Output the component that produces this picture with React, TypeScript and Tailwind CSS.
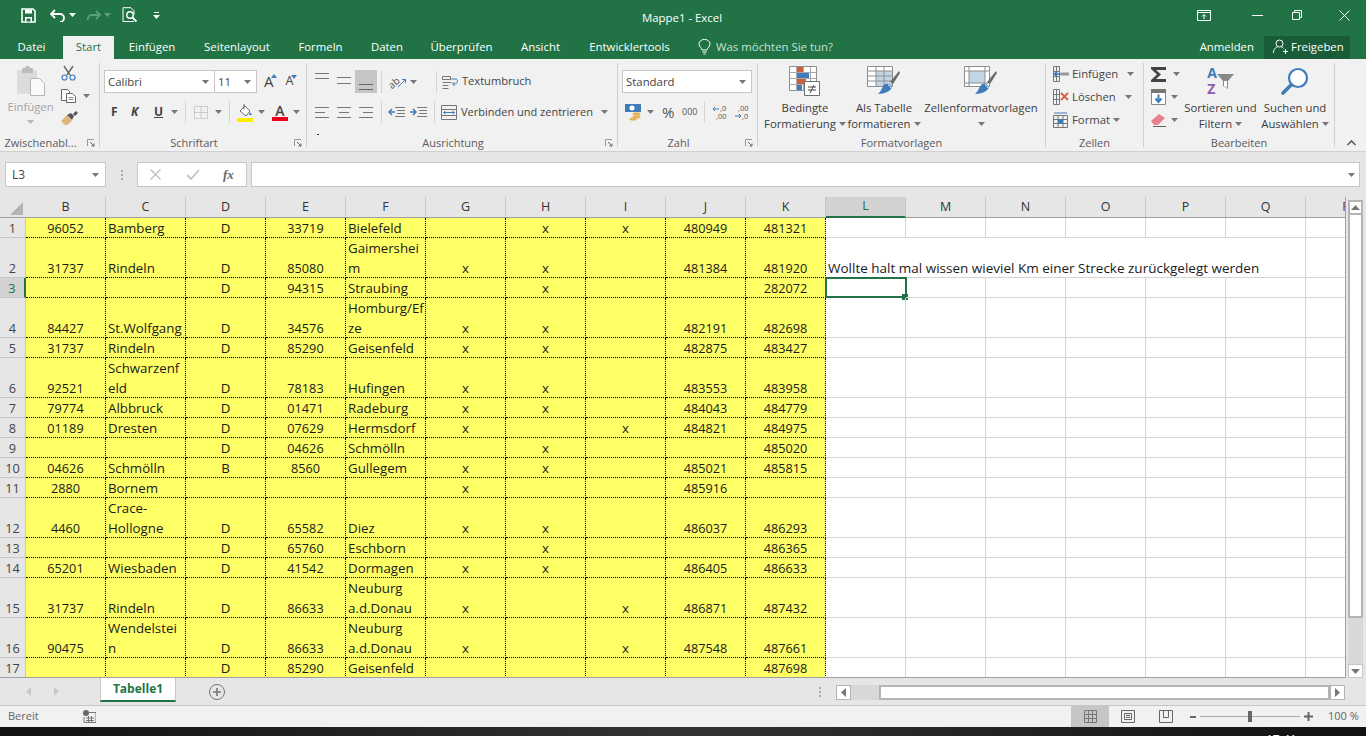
import React from "react";

type RowData = { h: number; n: number; cells: string[] };

const rows: RowData[] = [
  { h: 20, n: 1, cells: ["96052", "Bamberg", "D", "33719", "Bielefeld", "", "x", "x", "480949", "481321"] },
  { h: 40, n: 2, cells: ["31737", "Rindeln", "D", "85080", "Gaimershei\nm", "x", "x", "", "481384", "481920"] },
  { h: 20, n: 3, cells: ["", "", "D", "94315", "Straubing", "", "x", "", "", "282072"] },
  { h: 40, n: 4, cells: ["84427", "St.Wolfgang", "D", "34576", "Homburg/Ef\nze", "x", "x", "", "482191", "482698"] },
  { h: 20, n: 5, cells: ["31737", "Rindeln", "D", "85290", "Geisenfeld", "x", "x", "", "482875", "483427"] },
  { h: 40, n: 6, cells: ["92521", "Schwarzenf\neld", "D", "78183", "Hufingen", "x", "x", "", "483553", "483958"] },
  { h: 20, n: 7, cells: ["79774", "Albbruck", "D", "01471", "Radeburg", "x", "x", "", "484043", "484779"] },
  { h: 20, n: 8, cells: ["01189", "Dresten", "D", "07629", "Hermsdorf", "x", "", "x", "484821", "484975"] },
  { h: 20, n: 9, cells: ["", "", "D", "04626", "Schmölln", "", "x", "", "", "485020"] },
  { h: 20, n: 10, cells: ["04626", "Schmölln", "B", "8560", "Gullegem", "x", "x", "", "485021", "485815"] },
  { h: 20, n: 11, cells: ["2880", "Bornem", "", "", "", "x", "", "", "485916", ""] },
  { h: 40, n: 12, cells: ["4460", "Crace-\nHollogne", "D", "65582", "Diez", "x", "x", "", "486037", "486293"] },
  { h: 20, n: 13, cells: ["", "", "D", "65760", "Eschborn", "", "x", "", "", "486365"] },
  { h: 20, n: 14, cells: ["65201", "Wiesbaden", "D", "41542", "Dormagen", "x", "x", "", "486405", "486633"] },
  { h: 40, n: 15, cells: ["31737", "Rindeln", "D", "86633", "Neuburg\na.d.Donau", "x", "", "x", "486871", "487432"] },
  { h: 40, n: 16, cells: ["90475", "Wendelstei\nn", "D", "86633", "Neuburg\na.d.Donau", "x", "", "x", "487548", "487661"] },
  { h: 20, n: 17, cells: ["", "", "D", "85290", "Geisenfeld", "", "", "", "", "487698"] },
];

const headers = ["B", "C", "D", "E", "F", "G", "H", "I", "J", "K", "L", "M", "N", "O", "P", "Q"];
const leftCols = [1, 4];

const tabs = [
  { label: "Datei", w: "w-[63px]" },
  { label: "Start", w: "w-[51px]" },
  { label: "Einfügen", w: "w-[76px]" },
  { label: "Seitenlayout", w: "w-[94px]" },
  { label: "Formeln", w: "w-[73px]" },
  { label: "Daten", w: "w-[60px]" },
  { label: "Überprüfen", w: "w-[89px]" },
  { label: "Ansicht", w: "w-[69px]" },
  { label: "Entwicklertools", w: "w-[109px]" },
];

function Caret({ color = "#777" }: { color?: string }) {
  return (
    <svg width="7" height="4" viewBox="0 0 7 4" className="shrink-0">
      <path d="M0 0h7L3.5 4z" fill={color} />
    </svg>
  );
}

function Launcher() {
  return (
    <svg width="8" height="8" viewBox="0 0 8 8" className="absolute right-[4px] top-[4px]">
      <path d="M.5 7V.5H7" fill="none" stroke="#9a9a9a" />
      <path d="M3 3l4 4M7 4.5V7H4.5" fill="none" stroke="#666" />
    </svg>
  );
}

function Sep() {
  return <div className="w-px h-[22px] bg-[#d4d4d4] shrink-0" />;
}

function Lines({ lines, color = "#777" }: { lines: [number, number, number][]; color?: string }) {
  return (
    <svg width="16" height="20" viewBox="0 0 16 20" className="shrink-0">
      {lines.map(([a, b, y], i) => (
        <path key={i} d={`M${a} ${y + 0.5}H${b}`} stroke={color} />
      ))}
    </svg>
  );
}

function Group({ w, label, launcher, children }: { w: string; label: string; launcher?: boolean; children: React.ReactNode }) {
  return (
    <div className={`${w} mt-[4px] h-[84px] border-r border-[#d0d0d0] shrink-0 flex flex-col`}>
      <div className="h-[72px] flex">{children}</div>
      <div className={`relative h-[12px] text-center text-[11px] leading-[16px] text-[#5c5c5c] whitespace-nowrap ${launcher ? "pr-[18px]" : ""}`}>
        {label}
        {launcher && <Launcher />}
      </div>
    </div>
  );
}

function BigButton({ w, icon, l1, l2, caretOnly }: { w: string; icon: React.ReactNode; l1: string; l2?: string; caretOnly?: boolean }) {
  return (
    <div className={`${w} shrink-0 flex flex-col items-center text-[11.3px] leading-[16px] text-[#3c3c3c] whitespace-nowrap`}>
      <div className="h-[32px] mt-[2px] flex items-center justify-center">{icon}</div>
      <div className="mt-[3px]">{l1}</div>
      {caretOnly ? (
        <div className="h-[16px] flex items-center"><Caret /></div>
      ) : (
        <div className="flex items-center gap-[3px]">{l2}<Caret /></div>
      )}
    </div>
  );
}

function TableBrush({ solid }: { solid?: boolean }) {
  return (
    <svg width="34" height="32" viewBox="0 0 34 32">
      <path d="M.5 1.5h25v20H.5z" fill="#fff" stroke="#8e8e8e" />
      <path d={solid ? "M5 6h16v12H5z" : "M9 6h16v15H9z"} fill="#c3d4e6" />
      {solid ? (
        <path d="M.5 6h25M.5 18h25M5 1.5v20M21 1.5v20" stroke="#8e8e8e" fill="none" />
      ) : (
        <path d="M.5 6h25M.5 11h25M.5 16h25M9 1.5v20M17 1.5v20" stroke="#8e8e8e" fill="none" />
      )}
      <path d="M23 17l9-11 1 2-7 11z" fill="#6e6e6e" />
      <path d="M18 19c3-1 6 0 7 3-1 4-7 7-14 7 3-2 4-7 7-10z" fill="#3f7cb8" />
      <path d="M21 20c1 0 3 1 3 3" stroke="#fff" fill="none" />
    </svg>
  );
}

function CondFormat() {
  return (
    <svg width="32" height="32" viewBox="0 0 32 32">
      <path d="M.5 1.5h27v24H.5z" fill="#fff" stroke="#8e8e8e" />
      <path d="M.5 7.5h27M.5 13.5h27M.5 19.5h27M7.5 1.5v24M14.5 1.5v24M21.5 1.5v24" stroke="#a8a8a8" fill="none" />
      <path d="M8 2h6v5H8zM8 14h9v5H8z" fill="#d0603c" />
      <path d="M8 8h12v5H8zM8 20h5v5H8z" fill="#3f7cb8" />
      <path d="M15.5 16.5h15v14h-15z" fill="#fff" stroke="#6e6e6e" />
      <path d="M19 22h8M19 25h8M25 20l-4 8" stroke="#444" fill="none" />
    </svg>
  );
}

export default function App() {
  return (
    <div className="w-[1366px] h-[736px] overflow-hidden flex flex-col bg-[#e6e6e6] font-['Open_Sans','Noto_Sans',sans-serif]">
      {/* Title bar */}
      <div className="h-[36px] shrink-0 bg-[#217346] flex items-center text-white relative">
        <div className="flex items-center ml-[21px] mb-[6px]">
          <svg width="15" height="15" viewBox="0 0 15 15">
            <path d="M1 1h11l2 2v11H1z" fill="none" stroke="#fff" strokeWidth="1.6" />
            <path d="M4 1.5h7v4H4zM4 9h7v5H4z" fill="#fff" />
            <path d="M5.5 10.5h4v3h-4z" fill="#217346" />
          </svg>
          <svg width="17" height="13" viewBox="0 0 17 13" className="ml-[14px]">
            <path d="M5 1L1 5l4 4" fill="none" stroke="#fff" strokeWidth="1.8" />
            <path d="M1.5 5H10a4 4 0 0 1 0 8" fill="none" stroke="#fff" strokeWidth="1.8" />
          </svg>
          <div className="ml-[2px]"><Caret color="#fff" /></div>
          <svg width="15" height="11" viewBox="0 0 15 11" className="ml-[10px]">
            <path d="M10 1l4 4-4 4M14 5H6a4 4 0 0 0-4 5" fill="none" stroke="#5d9f7f" strokeWidth="1.8" />
          </svg>
          <div className="ml-[3px]"><Caret color="#5d9f7f" /></div>
          <svg width="16" height="16" viewBox="0 0 16 16" className="ml-[11px]">
            <path d="M1 .7h8l3 3v4M12 14.5H1V.7" fill="none" stroke="#fff" />
            <circle cx="8" cy="8" r="3.2" fill="none" stroke="#fff" strokeWidth="1.4" />
            <path d="M10.5 10.5l4 4" stroke="#fff" strokeWidth="1.8" />
          </svg>
          <div className="ml-[15px] flex flex-col items-center gap-[2px]">
            <div className="w-[5px] h-px bg-white" />
            <Caret color="#fff" />
          </div>
        </div>
        <div className="absolute left-[642px] top-[9px] text-[11.4px] leading-[18px] whitespace-nowrap">Mappe1 - Excel</div>
        <div className="ml-auto flex items-center mr-[16px] mb-[6px]">
          <svg width="14" height="11" viewBox="0 0 14 11">
            <path d="M.5.5h13v10H.5zM.5 2.5h13" fill="none" stroke="#fff" />
            <path d="M7 9V4.5M5 6.5l2-2 2 2" fill="none" stroke="#fff" />
          </svg>
          <div className="w-[11px] h-px bg-white ml-[41px]" />
          <svg width="10" height="10" viewBox="0 0 10 10" className="ml-[29px]">
            <path d="M.5 2.5h7v7h-7zM2.5 2.5v-2h7v7h-2" fill="none" stroke="#fff" />
          </svg>
          <svg width="11" height="11" viewBox="0 0 11 11" className="ml-[37px]">
            <path d="M.5.5l10 10M10.5.5l-10 10" stroke="#fff" fill="none" />
          </svg>
        </div>
      </div>

      {/* Tabs */}
      <div className="h-[23px] shrink-0 bg-[#217346] flex text-[11.4px] text-white">
        {tabs.map((t) => (
          <div
            key={t.label}
            className={`${t.w} shrink-0 flex items-center justify-center pb-[2px] ${t.label === "Start" ? "bg-[#f1f1f1] text-[#217346]" : ""}`}
          >
            {t.label}
          </div>
        ))}
        <div className="ml-[14px] pb-[2px] flex items-center gap-[5px] text-[#c9e0d3]">
          <svg width="13" height="16" viewBox="0 0 13 16">
            <path d="M4 11c0-2-3-3-3-6a5.5 4.6 0 0 1 11 0c0 3-3 4-3 6zM4.5 13h4M5.5 15h2" fill="none" stroke="#fff" />
          </svg>
          Was möchten Sie tun?
        </div>
        <div className="ml-auto flex items-center">
          <span className="pb-[2px]">Anmelden</span>
          <div className="ml-[10px] mr-[16px] h-[23px] w-[86px] pb-[2px] bg-[#1a5c38] flex items-center gap-[3px] pl-[9px]">
            <svg width="15" height="15" viewBox="0 0 15 15">
              <circle cx="6.5" cy="4.5" r="3.5" fill="none" stroke="#fff" />
              <path d="M.5 14c0-4 2-5.5 4-6M8.5 8c1 .3 1.5.6 2 1.3M10 12.5h5M12.5 10v5" fill="none" stroke="#fff" />
            </svg>
            Freigeben
          </div>
        </div>
      </div>

      {/* Ribbon */}
      <div className="h-[93px] shrink-0 bg-[#f1f1f1] border-b border-[#d0d0d0] flex relative">
        {/* Zwischenablage */}
        <Group w="w-[100px]" label="Zwischenabl..." launcher>
          <div className="w-[61px] shrink-0 flex flex-col items-center text-[11.3px] leading-[16px] text-[#a3a3a3]">
            <svg width="30" height="30" viewBox="0 0 30 30" className="mt-[3px]">
              <path d="M1 4h20v24H1z" fill="#dcdcdc" />
              <path d="M6 2h3l1-2h3l1 2h3v5H6z" fill="#bdbdbd" />
              <path d="M14.5 12.5h9l5 5v12h-14z" fill="#fafafa" stroke="#b5b5b5" />
            </svg>
            <div className="mt-[3px]">Einfügen</div>
            <div className="mt-[5px]"><Caret color="#b5b5b5" /></div>
          </div>
          <div className="flex flex-col">
            <div className="h-[20px] flex items-center">
              <svg width="15" height="16" viewBox="0 0 15 16">
                <path d="M3 1l6 9M12 1L6 10" stroke="#666" strokeWidth="1.4" fill="none" />
                <circle cx="3.5" cy="12.5" r="2.5" fill="none" stroke="#3f7cb8" strokeWidth="1.2" />
                <circle cx="11.5" cy="12.5" r="2.5" fill="none" stroke="#3f7cb8" strokeWidth="1.2" />
              </svg>
            </div>
            <div className="h-[20px] mt-[3px] flex items-center gap-[7px]">
              <svg width="15" height="14" viewBox="0 0 15 14">
                <path d="M.5.5h6l2 2v9h-8z" fill="#fff" stroke="#666" />
                <path d="M5.5 4.5h6l3 3v6h-9z" fill="#fff" stroke="#666" />
                <path d="M7.5 8.5h5M7.5 10.5h5" stroke="#888" />
              </svg>
              <Caret />
            </div>
            <div className="h-[20px] mt-[2px] flex items-center">
              <svg width="17" height="15" viewBox="0 0 17 15">
                <path d="M0 10l6-6 5 6-5 4c-2 1-4-2-6-4z" fill="#dcb77a" />
                <path d="M6 4l4-2 3 3-2 4z" fill="#555" />
                <path d="M12 3l3-3 2 2-3 3z" fill="#555" />
              </svg>
            </div>
          </div>
        </Group>

        {/* Schriftart */}
        <Group w="w-[207px]" label="Schriftart" launcher>
          <div className="pl-[4px] flex flex-col">
            <div className="mt-[7px] h-[23px] flex items-center text-[11.4px] text-[#444]">
              <div className="w-[111px] h-[23px] bg-white border border-[#c6c6c6] flex items-center justify-between pl-[3px] pr-[5px]">
                Calibri <Caret />
              </div>
              <div className="w-[43px] h-[23px] -ml-px bg-white border border-[#c6c6c6] flex items-center justify-between pl-[3px] pr-[5px]">
                11 <Caret />
              </div>
              <span className="ml-[7px] text-[15px] relative">A<span className="absolute -right-[3px] top-[4px] w-0 h-0 border-x-[3px] border-x-transparent border-b-[4px] border-b-[#3f7cb8]" /></span>
              <span className="ml-[12px] text-[12.5px] relative">A<span className="absolute -right-[4px] top-[3px] w-0 h-0 border-x-[3px] border-x-transparent border-t-[4px] border-t-[#3f7cb8]" /></span>
            </div>
            <div className="mt-[8px] h-[22px] flex items-center text-[#444]">
              <span className="ml-[7px] w-[8px] text-[12px] font-bold">F</span>
              <span className="ml-[12px] w-[10px] text-[12px] font-bold italic">K</span>
              <span className="ml-[13px] w-[9px] text-[12px] font-bold underline">U</span>
              <span className="ml-[8px]"><Caret /></span>
              <span className="ml-[7px]"><Sep /></span>
              <svg width="14" height="13" viewBox="0 0 14 13" className="ml-[8px]">
                <path d="M.5.5h13v12H.5zM.5 6.5h13M7 .5v12" fill="none" stroke="#aaa" strokeDasharray="1 1" />
              </svg>
              <span className="ml-[7px]"><Caret /></span>
              <span className="ml-[7px]"><Sep /></span>
              <svg width="16" height="19" viewBox="0 0 16 19" className="ml-[7px]">
                <path d="M3 8l5-5 5 5-4 5z" fill="#fff" stroke="#666" />
                <path d="M7 1v5" stroke="#666" />
                <path d="M13 9l2 3h-3z" fill="#3f7cb8" />
                <path d="M0 15h16v4H0z" fill="#ffed00" />
              </svg>
              <span className="ml-[5px]"><Caret /></span>
              <div className="ml-[7px] w-[16px] flex flex-col items-center leading-[13px] text-[14px] font-semibold">
                A
                <div className="w-[16px] h-[4px] bg-[#e8001c]" />
              </div>
              <span className="ml-[5px]"><Caret /></span>
            </div>
          </div>
        </Group>

        {/* Ausrichtung */}
        <Group w="w-[311px]" label="Ausrichtung" launcher>
          <div className="pl-[7px] flex flex-col">
            <div className="mt-[7px] h-[23px] flex items-center">
              <Lines lines={[[1, 15, 1], [1, 15, 6]]} />
              <span className="ml-[6px]"><Lines lines={[[1, 15, 5], [1, 15, 11]]} /></span>
              <div className="ml-[3px] w-[22px] h-[23px] bg-[#c6c6c6] flex items-center justify-center">
                <Lines lines={[[1, 15, 12], [1, 15, 17]]} color="#666" />
              </div>
              <span className="ml-[4px]"><Sep /></span>
              <svg width="18" height="16" viewBox="0 0 18 16" className="ml-[7px] overflow-visible">
                <text x="0" y="12" fontSize="10" fill="#555" transform="rotate(-40 6 10)" fontFamily="Open Sans">ab</text>
                <path d="M9 13l7-7M13 5.5h3.5V9" fill="none" stroke="#3f7cb8" />
              </svg>
              <span className="ml-[3px]"><Caret /></span>
              <span className="ml-[19px]"><Sep /></span>
              <svg width="16" height="14" viewBox="0 0 16 14" className="ml-[5px]">
                <path d="M.5 1.5h8v3h-8zM.5 7.5h9M.5 10.5h6M.5 13.5h6" fill="none" stroke="#777" />
                <path d="M9 4h5c2 0 2 5-1 5h-2M12.5 7l-2 2 2 2" fill="none" stroke="#3f7cb8" />
              </svg>
              <span className="ml-[4px] text-[11.1px] text-[#444] whitespace-nowrap">Textumbruch</span>
            </div>
            <div className="mt-[8px] h-[22px] flex items-center">
              <Lines lines={[[1, 15, 5], [1, 11, 10], [1, 15, 15]]} />
              <span className="ml-[6px]"><Lines lines={[[1, 15, 5], [3, 13, 10], [1, 15, 15]]} /></span>
              <span className="ml-[6px]"><Lines lines={[[1, 15, 5], [5, 15, 10], [1, 15, 15]]} /></span>
              <span className="ml-[7px]"><Sep /></span>
              <svg width="17" height="13" viewBox="0 0 17 13" className="ml-[6px]">
                <path d="M7 1.5h10M9 4.5h8M9 7.5h8M7 10.5h10" stroke="#777" fill="none" />
                <path d="M4 3L1 6l3 3" fill="none" stroke="#3f7cb8" strokeWidth="1.5" />
                <path d="M1 6h6" stroke="#3f7cb8" strokeWidth="1.5" />
              </svg>
              <svg width="17" height="13" viewBox="0 0 17 13" className="ml-[5px]">
                <path d="M7 1.5h10M9 4.5h8M9 7.5h8M7 10.5h10" stroke="#777" fill="none" />
                <path d="M3 3l3 3-3 3M0 6h6" fill="none" stroke="#3f7cb8" strokeWidth="1.5" />
              </svg>
              <span className="ml-[7px]"><Sep /></span>
              <svg width="16" height="15" viewBox="0 0 16 15" className="ml-[6px]">
                <path d="M.5.5h15v14H.5zM.5 4.5h15M.5 10.5h15" fill="none" stroke="#777" />
                <path d="M2.5 7.5h11M4.5 6l-2 1.5 2 1.5M11.5 6l2 1.5-2 1.5" fill="none" stroke="#3f7cb8" />
              </svg>
              <span className="ml-[4px] text-[11px] text-[#444] whitespace-nowrap">Verbinden und zentrieren</span>
              <span className="ml-[8px]"><Caret /></span>
            </div>
            <div className="mt-[11px] ml-[3px] w-[2px] h-[2px] bg-[#333]" />
          </div>
        </Group>

        {/* Zahl */}
        <Group w="w-[140px]" label="Zahl" launcher>
          <div className="pl-[4px] flex flex-col">
            <div className="mt-[7px] w-[130px] h-[23px] bg-white border border-[#c6c6c6] flex items-center justify-between pl-[3px] pr-[5px] text-[11.4px] text-[#444]">
              Standard <Caret />
            </div>
            <div className="mt-[8px] h-[22px] flex items-center text-[#555]">
              <svg width="17" height="18" viewBox="0 0 17 18" className="ml-[3px]">
                <path d="M0 1h16v8H0z" fill="#3f7cb8" />
                <circle cx="7" cy="5" r="2.5" fill="#fff" />
                <ellipse cx="11.5" cy="11" rx="4" ry="1.7" fill="#e5b45d" />
                <ellipse cx="11.5" cy="14" rx="4" ry="1.7" fill="#e5b45d" />
                <ellipse cx="8" cy="16" rx="3.5" ry="1.7" fill="#e5b45d" />
              </svg>
              <span className="ml-[5px]"><Caret /></span>
              <span className="ml-[8px] text-[15px] w-[16px]">%</span>
              <span className="ml-[4px] text-[9px] w-[15px]">000</span>
              <span className="ml-[7px]"><Sep /></span>
              <svg width="16" height="16" viewBox="0 0 16 16" className="ml-[7px] overflow-visible">
                <text x="8" y="7" fontSize="7.5" fill="#555" fontFamily="Open Sans">,0</text>
                <text x="4" y="15" fontSize="7.5" fill="#555" fontFamily="Open Sans">,00</text>
                <path d="M1 5h6M3 3L1 5l2 2" fill="none" stroke="#3f7cb8" />
              </svg>
              <svg width="16" height="16" viewBox="0 0 16 16" className="ml-[6px] overflow-visible">
                <text x="4" y="7" fontSize="7.5" fill="#555" fontFamily="Open Sans">,00</text>
                <text x="8" y="15" fontSize="7.5" fill="#555" fontFamily="Open Sans">,0</text>
                <path d="M1 12h6M5 10l2 2-2 2" fill="none" stroke="#3f7cb8" />
              </svg>
            </div>
          </div>
        </Group>

        {/* Formatvorlagen */}
        <Group w="w-[288px]" label="Formatvorlagen">
          <BigButton w="w-[86px] ml-[4px]" icon={<CondFormat />} l1="Bedingte" l2="Formatierung" />
          <BigButton w="w-[72px]" icon={<TableBrush />} l1="Als Tabelle" l2="formatieren" />
          <BigButton w="w-[122px]" icon={<TableBrush solid />} l1="Zellenformatvorlagen" caretOnly />
        </Group>

        {/* Zellen */}
        <Group w="w-[98px]" label="Zellen">
          <div className="pl-[7px] flex flex-col text-[11.3px] text-[#444]">
            <div className="mt-[1px] h-[20px] flex items-center">
              <svg width="16" height="16" viewBox="0 0 16 16">
                <path d="M.5.5h6v15h-6zM.5 5.5h6M.5 10.5h6M3.5.5v15" fill="none" stroke="#777" />
                <path d="M8 6.5h8v3H8z" fill="#999" />
                <path d="M8 8H1M4 5.5L1.5 8 4 10.5" fill="none" stroke="#3f7cb8" strokeWidth="1.5" />
              </svg>
              <span className="ml-[3px]">Einfügen</span>
              <span className="ml-[9px]"><Caret /></span>
            </div>
            <div className="mt-[3px] h-[20px] flex items-center">
              <svg width="16" height="16" viewBox="0 0 16 16">
                <path d="M.5.5h6v15h-6zM.5 5.5h6M.5 10.5h6M3.5.5v15" fill="none" stroke="#777" />
                <path d="M8 4l7 7M15 4l-7 7" stroke="#d9603c" strokeWidth="1.8" />
              </svg>
              <span className="ml-[3px]">Löschen</span>
              <span className="ml-[9px]"><Caret /></span>
            </div>
            <div className="mt-[3px] h-[20px] flex items-center">
              <svg width="16" height="16" viewBox="0 0 16 16">
                <path d="M.5 3.5h14v12H.5zM.5 7.5h14M.5 11.5h14M5 3.5v12M10 3.5v12" fill="none" stroke="#777" />
                <path d="M5 7.5h5v4H5z" fill="#3f7cb8" />
                <path d="M1 1h13" stroke="#3f7cb8" />
              </svg>
              <span className="ml-[3px]">Format</span>
              <span className="ml-[3px]"><Caret /></span>
            </div>
          </div>
        </Group>

        {/* Bearbeiten */}
        <Group w="w-[191px]" label="Bearbeiten">
          <div className="pl-[7px] w-[41px] shrink-0 flex flex-col">
            <div className="mt-[1px] h-[20px] flex items-center gap-[6px]">
              <svg width="16" height="15" viewBox="0 0 16 15">
                <path d="M0 0h15v3H5l5 4.5L5 12h10v3H0v-2l6-5.5L0 2z" fill="#444" />
              </svg>
              <Caret />
            </div>
            <div className="mt-[3px] h-[20px] flex items-center gap-[5px]">
              <svg width="15" height="16" viewBox="0 0 15 16">
                <path d="M.5.5h14v15H.5z" fill="#fff" stroke="#888" />
                <path d="M0 0h15v4H0z" fill="#777" />
                <path d="M7.5 5.5v7M4.5 9.5l3 3.5 3-3.5" fill="none" stroke="#3f7cb8" strokeWidth="2" />
              </svg>
              <Caret />
            </div>
            <div className="mt-[3px] h-[20px] flex items-center gap-[5px]">
              <svg width="15" height="14" viewBox="0 0 15 14">
                <path d="M0 8l8-7 6 4-7 7H3z" fill="#e9808f" />
                <path d="M2 13.5h13" stroke="#666" />
              </svg>
              <Caret />
            </div>
          </div>
          <BigButton
            w="w-[71px]"
            icon={
              <div className="flex items-center">
                <div className="flex flex-col text-[14px] leading-[16px] font-bold">
                  <span className="text-[#3f7cb8]">A</span>
                  <span className="text-[#8d5ba8]">Z</span>
                </div>
                <svg width="17" height="17" viewBox="0 0 17 17">
                  <path d="M0 1h17l-6 7v8l-5-3V8z" fill="#888" />
                  <path d="M7 8h3v7l-3-2z" fill="#fff" />
                </svg>
              </div>
            }
            l1="Sortieren und"
            l2="Filtern"
          />
          <BigButton
            w="w-[66px] ml-[6px]"
            icon={
              <svg width="28" height="28" viewBox="0 0 28 28">
                <circle cx="17" cy="11" r="9" fill="#fff" stroke="#3f7cb8" strokeWidth="2.2" />
                <path d="M10 18l-8 8" stroke="#3f7cb8" strokeWidth="3.6" strokeLinecap="round" />
              </svg>
            }
            l1="Suchen und"
            l2="Auswählen"
          />
        </Group>
        <svg width="9" height="6" viewBox="0 0 9 6" className="absolute left-[1347px] top-[81px]">
          <path d="M.5 5l4-4 4 4" fill="none" stroke="#555" strokeWidth="1.5" />
        </svg>
      </div>

      {/* Formula bar */}
      <div className="h-[45px] shrink-0 flex items-start pt-[10px] pl-[5px] pr-[6px] text-[12px] text-[#444]">
        <div className="w-[101px] h-[25px] bg-white border border-[#c6c6c6] flex items-center justify-between pl-[6px] pr-[6px]">
          L3 <Caret />
        </div>
        <div className="w-[31px] h-[25px] flex flex-col items-center justify-center gap-[2px]">
          <div className="w-[2px] h-[2px] bg-[#aaa]" />
          <div className="w-[2px] h-[2px] bg-[#aaa]" />
          <div className="w-[2px] h-[2px] bg-[#aaa]" />
        </div>
        <div className="w-[110px] h-[25px] bg-white border border-[#c6c6c6] flex items-center">
          <svg width="11" height="11" viewBox="0 0 11 11" className="ml-[12px]">
            <path d="M.5.5l10 10M10.5.5l-10 10" stroke="#c4c4c4" strokeWidth="1.5" />
          </svg>
          <svg width="14" height="11" viewBox="0 0 14 11" className="ml-[25px]">
            <path d="M1 6l4 4 8-9" fill="none" stroke="#c4c4c4" strokeWidth="1.8" />
          </svg>
          <span className="ml-[23px] font-['Liberation_Serif',serif] italic font-bold text-[13px] text-[#666]">fx</span>
        </div>
        <div className="ml-[4px] flex-1 h-[25px] bg-white border border-[#c6c6c6] flex items-center justify-end pr-[4px]">
          <Caret />
        </div>
      </div>

      {/* Sheet */}
      <div className="h-[481px] shrink-0 flex">
        <div className="w-[1346px] shrink-0 flex flex-col border-r border-[#9f9f9f]">
          <div className="h-[21px] shrink-0 flex border-b border-[#9f9f9f] text-[12.5px] text-[#333]">
            <div className="w-[26px] shrink-0 flex items-end justify-end pr-[3px] pb-[2px]">
              <div className="w-0 h-0 border-l-[13px] border-l-transparent border-b-[13px] border-b-[#b4b4b4]" />
            </div>
            {headers.map((h) => (
              <div
                key={h}
                className={`w-[80px] shrink-0 flex items-center justify-center border-r border-[#c6c6c6] ${h === "L" ? "bg-[#d2d2d2] text-[#217346] border-b-2 border-b-[#217346] h-[21px]" : ""}`}
              >
                {h}
              </div>
            ))}
            <div className="w-[39px] overflow-hidden shrink-0">
              <div className="w-[80px] text-center leading-[20px] text-[#7a2a1a]">R</div>
            </div>
          </div>
          <div className="flex-1 overflow-hidden border-b border-[#9f9f9f] bg-white text-[13.3px] leading-[20px] text-[#1a1a1a]">
            {rows.map((r) => (
              <div key={r.n} className="flex" style={{ height: r.h }}>
                <div
                  className={`w-[26px] shrink-0 flex items-end justify-center border-r border-b border-[#c6c6c6] text-[12.7px] text-[#444] ${r.n === 3 ? "bg-[#d2d2d2] text-[#217346] border-r-2 border-r-[#217346]" : "bg-[#e6e6e6]"}`}
                >
                  <span className="translate-y-px">{r.n}</span>
                </div>
                {r.cells.map((c, i) => (
                  <div
                    key={i}
                    className={`w-[80px] shrink-0 bg-[#ffff66] border-r border-b border-dotted border-black flex flex-col justify-end whitespace-pre-line overflow-hidden ${leftCols.includes(i) ? "pl-[2px] text-left" : "text-center"} ${/^\d+$/.test(c) ? "text-[12.7px]" : ""}`}
                  >
                    <span className="translate-y-px">{c}</span>
                  </div>
                ))}
                {r.n === 2 ? (
                  <div className="w-[480px] shrink-0 border-r border-b border-[#d4d4d4] flex items-end pl-[2px] whitespace-nowrap text-[13.5px]">
                    <span className="translate-y-px">Wollte halt mal wissen wieviel Km einer Strecke zurückgelegt werden</span>
                  </div>
                ) : (
                  [0, 1, 2, 3, 4, 5].map((k) => (
                    <div key={k} className="relative w-[80px] shrink-0 border-r border-b border-[#d4d4d4]">
                      {r.n === 3 && k === 0 && (
                        <div className="absolute -left-px -top-px w-[82px] h-[21px] border-2 border-[#217346]">
                          <div className="absolute -right-[3px] -bottom-[4px] w-[6px] h-[6px] bg-[#217346]" />
                        </div>
                      )}
                    </div>
                  ))
                )}
                <div className="flex-1 border-b border-[#d4d4d4]" />
              </div>
            ))}
          </div>
        </div>
        {/* Vertical scrollbar */}
        <div className="flex-1 pl-[2px] pr-[3px] pt-[3px] flex flex-col">
          <div className="w-[15px] h-[15px] bg-white border-2 border-[#b4b4b4] flex items-center justify-center">
            <svg width="9" height="5" viewBox="0 0 9 5"><path d="M0 5h9L4.5 0z" fill="#777" /></svg>
          </div>
          <div className="w-[15px] h-[403px] bg-white border-x-2 border-b-2 border-[#b4b4b4]" />
          <div className="w-[15px] h-[46px] bg-[#d8d8d8]" />
          <div className="w-[15px] h-[14px] bg-white border border-[#c6c6c6] flex items-center justify-center">
            <svg width="9" height="5" viewBox="0 0 9 5"><path d="M0 0h9L4.5 5z" fill="#777" /></svg>
          </div>
        </div>
      </div>

      {/* Sheet tabs */}
      <div className="h-[28px] shrink-0 flex items-start relative border-b border-[#c6c6c6]">
        <div className="w-[100px] h-[27px] shrink-0 flex items-center">
          <svg width="6" height="9" viewBox="0 0 6 9" className="ml-[26px]"><path d="M5 0v9L0 4.5z" fill="#c8c8c8" /></svg>
          <svg width="6" height="9" viewBox="0 0 6 9" className="ml-[22px]"><path d="M0 0v9l5-4.5z" fill="#c8c8c8" /></svg>
        </div>
        <div className="w-[76px] h-[24px] shrink-0 bg-white border-x border-[#c6c6c6] border-b-2 border-b-[#217346] flex items-center justify-center text-[12px] font-bold text-[#217346]">
          Tabelle1
        </div>
        <div className="ml-[33px] mt-[6px] w-[16px] h-[16px] rounded-full border border-[#777] flex items-center justify-center text-[#777]">
          <svg width="10" height="10" viewBox="0 0 10 10"><path d="M5 1v8M1 5h8" stroke="#777" strokeWidth="1.6" /></svg>
        </div>
        <div className="ml-[594px] mt-[9px] flex flex-col gap-[2px]">
          <div className="w-[2px] h-[2px] bg-[#aaa]" />
          <div className="w-[2px] h-[2px] bg-[#aaa]" />
          <div className="w-[2px] h-[2px] bg-[#aaa]" />
        </div>
        <div className="ml-[15px] mt-[7px] w-[509px] h-[15px] flex">
          <div className="w-[15px] h-[15px] bg-white border border-[#b4b4b4] flex items-center justify-center">
            <svg width="5" height="9" viewBox="0 0 5 9"><path d="M5 0v9L0 4.5z" fill="#777" /></svg>
          </div>
          <div className="w-[28px] bg-[#d8d8d8]" />
          <div className="flex-1 bg-white border-2 border-[#b4b4b4]" />
          <div className="w-[15px] h-[15px] bg-white border border-[#b4b4b4] flex items-center justify-center">
            <svg width="5" height="9" viewBox="0 0 5 9"><path d="M0 0v9l5-4.5z" fill="#777" /></svg>
          </div>
        </div>
      </div>

      {/* Status bar */}
      <div className="h-[21px] shrink-0 bg-[#f1f1f1] flex items-center text-[11px] text-[#666]">
        <span className="ml-[8px] w-[75px]">Bereit</span>
        <svg width="13" height="13" viewBox="0 0 13 13">
          <circle cx="3" cy="3" r="3" fill="#666" />
          <path d="M5 2.5h8v10H1V7" fill="none" stroke="#777" />
          <path d="M3 8h8M3 10.5h8M5.5 6v6M8.5 6v6" stroke="#777" />
        </svg>
        <div className="ml-auto flex items-center h-[21px]">
          <div className="w-[38px] h-[21px] bg-[#c6c6c6] flex items-center justify-center">
            <svg width="13" height="13" viewBox="0 0 13 13">
              <path d="M.5.5h12v12H.5zM4.5.5v12M8.5.5v12M.5 4.5h12M.5 8.5h12" fill="none" stroke="#777" />
            </svg>
          </div>
          <svg width="14" height="13" viewBox="0 0 14 13" className="ml-[12px]">
            <path d="M.5.5h13v12H.5z" fill="none" stroke="#666" />
            <path d="M3.5 3.5h7v6h-7zM5 5.5h4M5 7.5h4" fill="none" stroke="#666" />
          </svg>
          <svg width="14" height="13" viewBox="0 0 14 13" className="ml-[24px]">
            <path d="M.5.5h13v12H.5zM4.5.5v7h5v-7" fill="none" stroke="#666" />
          </svg>
          <div className="ml-[17px] w-[6px] h-[2px] bg-[#666]" />
          <div className="ml-[4px] relative w-[100px] h-px bg-[#aaa]">
            <div className="absolute left-[48px] -top-[5px] w-[4px] h-[11px] bg-[#666]" />
          </div>
          <svg width="9" height="9" viewBox="0 0 9 9" className="ml-[4px]"><path d="M4.5 0v9M0 4.5h9" stroke="#666" strokeWidth="2" /></svg>
          <span className="ml-[15px] mr-[8px] w-[30px] whitespace-nowrap">100 %</span>
        </div>
      </div>

      {/* Desktop strip */}
      <div className="h-[9px] shrink-0 overflow-hidden bg-gradient-to-r from-[#111] via-[#333] to-[#111] text-white text-[12px] leading-[16px]">
        <div className="ml-[1266px] mt-[5px]">17:41</div>
      </div>
    </div>
  );
}
